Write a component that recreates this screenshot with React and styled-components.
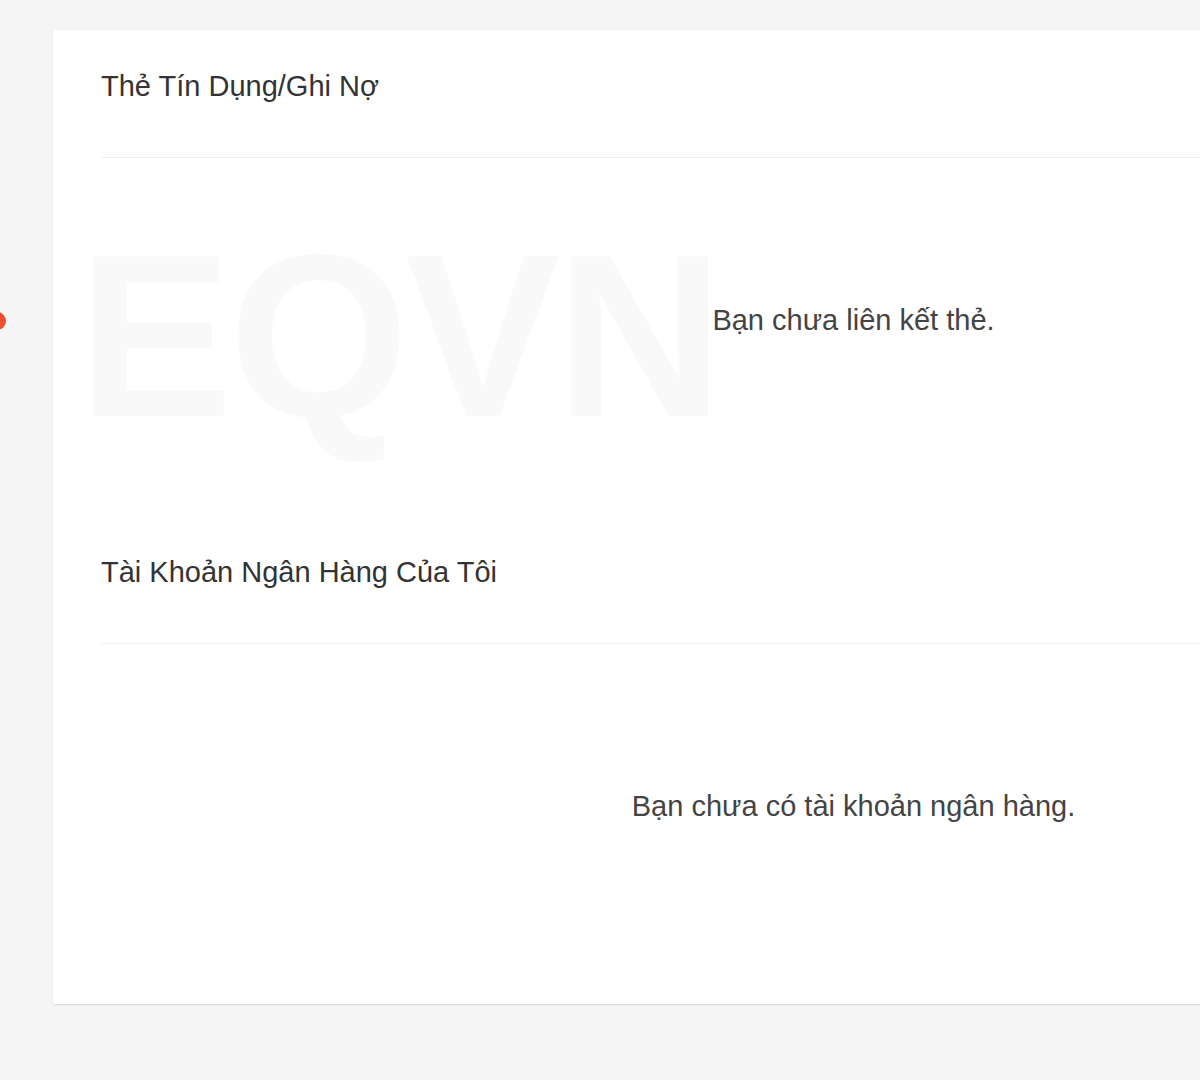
import styled, { createGlobalStyle } from 'styled-components';

const GlobalStyle = createGlobalStyle`
  html, body {
    margin: 0;
    padding: 0;
    background-color: #f5f5f5;
    overflow: hidden;
    font-family: "Liberation Sans", Arial, sans-serif;
  }
`;

const Page = styled.div`
  display: flex;
  align-items: flex-start;
  padding-top: 30px;
  min-height: 1080px;
  box-sizing: border-box;
`;

const Sidebar = styled.div`
  position: relative;
  flex: none;
  width: 53px;
  height: 600px;
`;

const Dot = styled.span`
  position: absolute;
  left: -12px;
  top: 282px;
  width: 18px;
  height: 18px;
  border-radius: 50%;
  background-color: #ee4d2d;
`;

const Card = styled.div`
  position: relative;
  flex: none;
  width: 1601px;
  padding: 0 48px 2px;
  box-sizing: border-box;
  background-color: #fff;
  border-radius: 2px;
  box-shadow: 0 1px 2px rgba(0, 0, 0, 0.13);
`;

const Watermark = styled.div`
  position: absolute;
  left: 25px;
  top: 190px;
  font-family: "Liberation Sans", Arial, sans-serif;
  font-weight: 700;
  font-size: 232px;
  letter-spacing: -4px;
  line-height: 1;
  color: #f9f9f9;
  pointer-events: none;
  user-select: none;
`;

const Header = styled.div`
  padding: 39px 0 54px 0;
  border-bottom: 1px solid #efefef;
  font-size: 29px;
  line-height: 34px;
  color: #333;
`;

const Empty = styled.div`
  position: relative;
  height: 358px;
  padding-bottom: 34px;
  box-sizing: border-box;
  display: flex;
  justify-content: center;
  align-items: center;
  font-size: 29px;
  line-height: 34px;
  color: #444;
`;

const sections = [
  { title: 'Thẻ Tín Dụng/Ghi Nợ', empty: 'Bạn chưa liên kết thẻ.' },
  { title: 'Tài Khoản Ngân Hàng Của Tôi', empty: 'Bạn chưa có tài khoản ngân hàng.' },
];

function App() {
  return (
    <>
      <GlobalStyle />
      <Page>
        <Sidebar>
          <Dot />
        </Sidebar>
        <Card>
          <Watermark>EQVN</Watermark>
          {sections.map((s) => (
            <section key={s.title}>
              <Header>{s.title}</Header>
              <Empty>{s.empty}</Empty>
            </section>
          ))}
        </Card>
      </Page>
    </>
  );
}

export default App;
